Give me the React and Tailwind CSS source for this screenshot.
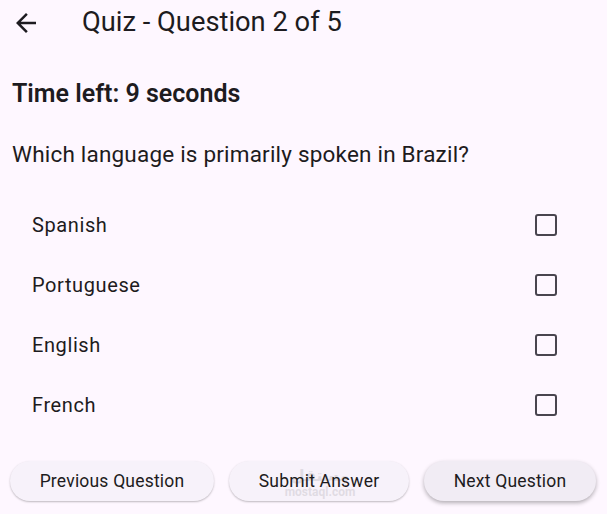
import { useState } from 'react'

const options = ['Spanish', 'Portuguese', 'English', 'French']

function BackArrow() {
  return (
    <svg viewBox="0 0 24 24" className="w-[30px] h-[30px] fill-[#1d1b20]">
      <path d="M20 11H7.83l5.59-5.59L12 4l-8 8 8 8 1.41-1.41L7.83 13H20v-2z" />
    </svg>
  )
}

export default function App() {
  const [checked, setChecked] = useState([])

  const toggle = (opt) => {
    setChecked((prev) =>
      prev.includes(opt) ? prev.filter((o) => o !== opt) : [...prev, opt]
    )
  }

  return (
    <div
      className="relative w-[607px] h-[514px] overflow-hidden bg-[#fef7ff] text-[#1d1b20]"
      style={{ fontFamily: 'Roboto, "Liberation Sans", sans-serif' }}
    >
      {/* App bar */}
      <div className="flex items-center h-[45px] pl-[11px]">
        <BackArrow />
        <h1 className="ml-[41px] text-[27.3px] leading-none font-normal">
          Quiz - Question 2 of 5
        </h1>
      </div>

      {/* Timer */}
      <p className="mt-[33px] pl-[12px] text-[25px] leading-[32px] font-semibold">
        Time left: 9 seconds
      </p>

      {/* Question */}
      <p className="mt-[29px] pl-[12px] text-[22.5px] leading-[30px] tracking-[0.2px]">
        Which language is primarily spoken in Brazil?
      </p>

      {/* Options */}
      <div className="mt-[26px]">
        {options.map((opt) => (
          <button
            key={opt}
            onClick={() => toggle(opt)}
            className="flex items-center justify-between w-full h-[60px] pl-[32px] pr-[50px] text-left"
          >
            <span className="text-[20px] tracking-[0.6px]">{opt}</span>
            <span
              className={`w-[22px] h-[22px] rounded-[3px] border-[2.5px] border-[#49454f]
                ${checked.includes(opt) ? 'bg-[#65558f] border-[#65558f]' : ''}`}
            />
          </button>
        ))}
      </div>

      {/* Bottom buttons */}
      <div className="flex gap-[15px] pl-[10px] mt-[26px]">
        <button className="h-[40px] w-[204px] rounded-full bg-[#f7f2fa] text-[17.5px] tracking-[0.2px] shadow-[0_1px_2px_rgba(0,0,0,0.25)]">
          Previous Question
        </button>
        <button className="h-[40px] w-[180px] rounded-full bg-[#f7f2fa] text-[17.5px] tracking-[0.2px] shadow-[0_1px_2px_rgba(0,0,0,0.25)]">
          Submit Answer
        </button>
        <button className="h-[40px] w-[172px] rounded-full bg-[#f1ecf4] text-[17.5px] tracking-[0.2px] shadow-[0_2px_4px_rgba(0,0,0,0.3)]">
          Next Question
        </button>
      </div>

      {/* Watermark */}
      <div className="absolute left-[270px] top-[468px] w-[100px] flex flex-col items-center pointer-events-none opacity-[0.1] leading-none">
        <span className="text-[16px] font-bold" style={{ fontFamily: '"DejaVu Sans", sans-serif' }}>مستقل</span>
        <span className="text-[12px] font-bold mt-[2px]">mostaql.com</span>
      </div>
    </div>
  )
}
